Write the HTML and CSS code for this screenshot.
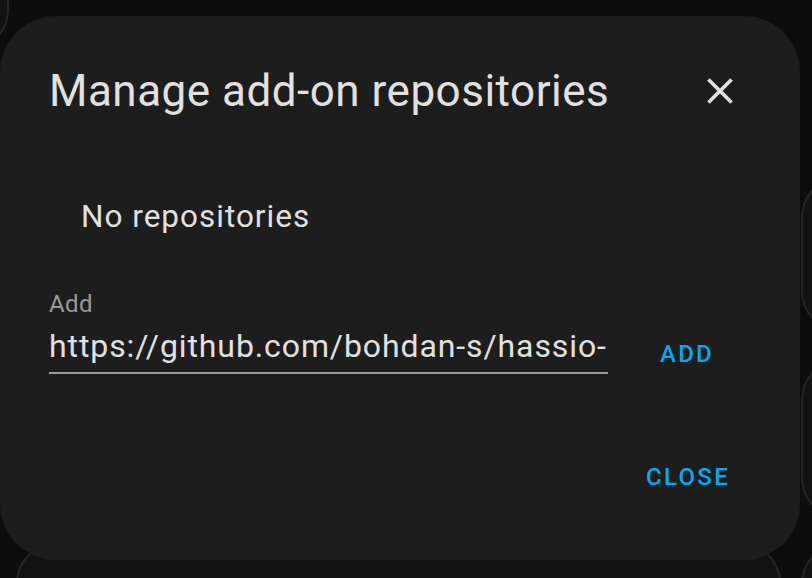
FILE: index.html
```html
<!DOCTYPE html>
<html lang="en">
<head>
    <meta charset="UTF-8">
    <meta name="viewport" content="width=device-width, initial-scale=1.0">
    <title>Manage add-on repositories</title>
    <link rel="stylesheet" href="styles.css">
</head>
<body>
    <div class="page">
        <div class="page-grid">
            <div class="column column-left">
                <div class="card card-top"></div>
            </div>
            <div class="column column-main">
                <div class="card card-bottom"></div>
            </div>
            <div class="column column-right">
                <div class="card card-a"></div>
                <div class="card card-b"></div>
                <div class="card card-c"></div>
            </div>
        </div>
    </div>

    <div class="dialog">
        <div class="dialog-header">
            <h2 class="dialog-title">Manage add-on repositories</h2>
            <button class="icon-button" aria-label="Close">
                <svg viewBox="0 0 24 24" width="44" height="44">
                    <path fill="currentColor" d="M19,6.41L17.59,5L12,10.59L6.41,5L5,6.41L10.59,12L5,17.59L6.41,19L12,13.41L17.59,19L19,17.59L13.41,12L19,6.41Z"/>
                </svg>
            </button>
        </div>
        <div class="repo-list">
            <div class="repo-empty">No repositories</div>
        </div>
        <div class="add-row">
            <label class="text-field">
                <span class="field-label">Add</span>
                <input class="field-input" type="text" value="https://github.com/bohdan-s/hassio-repository">
            </label>
            <button class="text-button add-button">Add</button>
        </div>
        <div class="dialog-actions">
            <button class="text-button close-button">Close</button>
        </div>
    </div>
</body>
</html>
```

FILE: styles.css
```css
body {
    margin: 0;
    height: 100vh;
    overflow: hidden;
    background-color: #0d0d0d;
    font-family: Roboto, "Noto Sans", sans-serif;
}
.page {
    height: 100vh;
    overflow: hidden;
}
.page-grid {
    display: grid;
    grid-template-columns: 220px 765px 220px;
    column-gap: 7px;
    margin-left: -211px;
}
.column-right {
    margin-left: 13px;
    padding-top: 177px;
    display: flex;
    flex-direction: column;
    gap: 29px;
}
.card {
    background-color: #121212;
    border: 2px solid #262626;
    border-radius: 40px;
    box-sizing: border-box;
}
.card-top {
    height: 150px;
    margin-top: -100px;
}
.card-bottom {
    height: 200px;
    margin-top: 543px;
}
.card-a {
    height: 154px;
}
.card-b {
    height: 158px;
}
.card-c {
    height: 200px;
    margin-top: -3px;
}

.dialog {
    position: fixed;
    left: 0;
    top: 16px;
    width: 800px;
    height: 544px;
    box-sizing: border-box;
    padding: 49px 58px 50px 49px;
    background-color: #1d1d1d;
    border-radius: 56px;
    display: flex;
    flex-direction: column;
    color: #e1e1e1;
}
.dialog-header {
    display: flex;
    justify-content: space-between;
    align-items: center;
    height: 52px;
}
.dialog-title {
    margin: 0;
    font-size: 44px;
    font-weight: 400;
    line-height: 52px;
    letter-spacing: 0.5px;
    white-space: nowrap;
}
.icon-button {
    background: none;
    border: none;
    padding: 0;
    width: 44px;
    height: 44px;
    color: #e1e1e1;
    cursor: pointer;
}
.icon-button svg {
    display: block;
}
.repo-list {
    margin-top: 82px;
    padding-left: 32px;
}
.repo-empty {
    font-size: 31.5px;
    line-height: 36px;
    letter-spacing: 1px;
}
.add-row {
    display: flex;
    align-items: flex-start;
    gap: 24px;
    margin-top: 55px;
}
.text-field {
    display: flex;
    flex-direction: column;
    width: 559px;
    border-bottom: 2px solid #9a9a9a;
    padding-bottom: 6px;
}
.field-label {
    font-size: 24px;
    line-height: 28px;
    color: #9a9a9a;
    margin-bottom: 8px;
    letter-spacing: 0.4px;
}
.field-input {
    background: none;
    border: none;
    outline: none;
    padding: 0;
    margin: 0;
    font-family: inherit;
    font-size: 32px;
    line-height: 40px;
    height: 40px;
    letter-spacing: 0.9px;
    color: #e1e1e1;
    width: 100%;
}
.text-button {
    background: none;
    border: none;
    font-family: inherit;
    font-size: 24px;
    font-weight: 500;
    line-height: 66px;
    letter-spacing: 2.3px;
    text-transform: uppercase;
    color: #03a9f4;
    cursor: pointer;
}
.add-button {
    margin-top: 31px;
    width: 110px;
    padding: 0;
}
.dialog-actions {
    margin-top: auto;
    display: flex;
    justify-content: flex-end;
}
.close-button {
    width: 108px;
    padding: 0;
}
```
